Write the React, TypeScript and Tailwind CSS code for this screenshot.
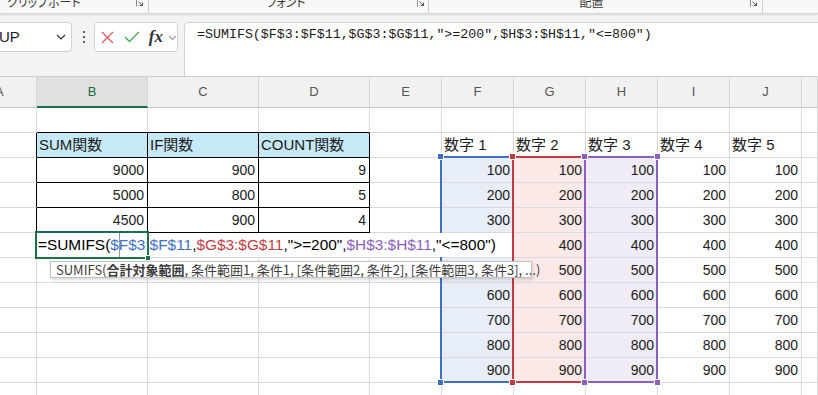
import React from 'react';

const CELL_FONT = "font-['Liberation_Sans','Noto_Sans_CJK_JP',sans-serif]";

const COLS = ['A', 'B', 'C', 'D', 'E', 'F', 'G', 'H', 'I', 'J', ''];
const GRID = 'grid grid-cols-[37px_111px_111px_111px_72px_72px_72px_72px_72px_72px_1fr]';

type CellVal = { t: string; kind: 'head' | 'num' };

function cellValue(r: number, c: number): CellVal | null {
  if (r === 2) {
    if (c === 1) return { t: 'SUM関数', kind: 'head' };
    if (c === 2) return { t: 'IF関数', kind: 'head' };
    if (c === 3) return { t: 'COUNT関数', kind: 'head' };
    if (c >= 5 && c <= 9) return { t: '数字 ' + (c - 4), kind: 'head' };
    return null;
  }
  const table: Record<number, string[]> = {
    3: ['9000', '900', '9'],
    4: ['5000', '800', '5'],
    5: ['4500', '900', '4'],
  };
  if (table[r] && c >= 1 && c <= 3) return { t: table[r][c - 1], kind: 'num' };
  if (r >= 3 && r <= 11 && c >= 5 && c <= 9) return { t: String((r - 2) * 100), kind: 'num' };
  return null;
}

function Cell({ r, c }: { r: number; c: number }) {
  const rightBlack = c <= 3 && r >= 2 && r <= 5;
  const bottomBlack = c >= 1 && c <= 3 && r >= 1 && r <= 5;
  let bg = '';
  if (r === 2 && c >= 1 && c <= 3) bg = 'bg-[#c6e8f7]';
  else if (r >= 3 && r <= 11 && c === 5) bg = 'bg-[#e8eef8]';
  else if (r >= 3 && r <= 11 && c === 6) bg = 'bg-[#fbe9e8]';
  else if (r >= 3 && r <= 11 && c === 7) bg = 'bg-[#efecf7]';
  const v = cellValue(r, c);
  return (
    <div
      className={
        'h-[25px] border-r border-b flex items-center overflow-hidden whitespace-nowrap text-[#1b1b1b] ' +
        (rightBlack ? 'border-r-black ' : 'border-r-[#dadada] ') +
        (bottomBlack ? 'border-b-black ' : 'border-b-[#dadada] ') +
        bg +
        (v && v.kind === 'num' ? ' justify-end pr-[3px] text-[14px]' : ' justify-start pl-[2px] text-[15px]')
      }
    >
      {v ? v.t : null}
    </div>
  );
}

function Launcher() {
  return (
    <svg width="8" height="8" viewBox="0 0 8 8" className="shrink-0 mt-[-1px]">
      <path d="M0.5 7.5 V0.5 H7.5" stroke="#8a8a8a" strokeWidth="1" fill="none" />
      <path d="M2.5 2.5 L6.5 6.5 M6.5 3.5 V6.5 H3.5" stroke="#555" strokeWidth="1" fill="none" />
    </svg>
  );
}

function Handle({ pos, color }: { pos: 'tl' | 'tr' | 'bl' | 'br'; color: string }) {
  const p =
    pos === 'tl'
      ? '-left-[5px] -top-[5px]'
      : pos === 'tr'
      ? '-right-[5px] -top-[5px]'
      : pos === 'bl'
      ? '-left-[5px] -bottom-[5px]'
      : '-right-[5px] -bottom-[5px]';
  return <div className={'absolute w-[7px] h-[7px] border border-white ' + p + ' ' + color} />;
}

export default function App() {
  const rows = Array.from({ length: 12 }, (_, i) => i + 1);
  return (
    <div className={'w-[818px] h-[395px] overflow-hidden bg-white flex flex-col ' + CELL_FONT}>
      {/* ribbon group labels strip */}
      <div className="relative z-10 h-[14px] shrink-0 bg-[#f8f8f8] border-b border-[#d6d6d6] shadow-[0_1px_2px_rgba(0,0,0,0.12)] flex overflow-hidden text-[12px] leading-[12px] text-[#3a3a3a] font-['Noto_Sans_CJK_JP',sans-serif] [font-feature-settings:'palt']">
        <div className="w-[149px] shrink-0 flex items-start border-r border-[#d0d0d0]">
          <span className="flex-1 pl-[7px] mt-[-4px]">クリップボード</span>
          <Launcher />
          <span className="w-[4px]" />
        </div>
        <div className="w-[280px] shrink-0 flex items-start border-r border-[#d0d0d0]">
          <span className="flex-1 text-center mt-[-4px] pl-[6px]">フォント</span>
          <Launcher />
          <span className="w-[3px]" />
        </div>
        <div className="w-[334px] shrink-0 flex items-start border-r border-[#d0d0d0]">
          <span className="flex-1 text-center mt-[-4px] pl-[4px]">配置</span>
          <Launcher />
          <span className="w-[4px]" />
        </div>
        <div className="flex-1" />
      </div>

      {/* formula bar */}
      <div className="h-[62px] shrink-0 bg-[#f3f3f3] flex items-start pt-[8px]">
        <div className="ml-[-10px] w-[82px] h-[30px] bg-white border border-[#d1d1d1] rounded-[4px] flex items-center pl-[9px] pr-[5px]">
          <span className="flex-1 text-[15px] text-[#1b1b1b] font-['Liberation_Sans',sans-serif] ml-[-1px]">UP</span>
          <svg width="10" height="6" viewBox="0 0 10 6">
            <path d="M1 1 L5 5 L9 1" stroke="#333" strokeWidth="1.2" fill="none" />
          </svg>
        </div>
        <div className="w-[22px] h-[30px] flex flex-col items-center justify-center gap-[3px] pl-[1px]">
          <span className="w-[2px] h-[2px] bg-[#333] rounded-full" />
          <span className="w-[2px] h-[2px] bg-[#333] rounded-full" />
          <span className="w-[2px] h-[2px] bg-[#333] rounded-full" />
        </div>
        <div className="w-[84px] h-[30px] bg-white border border-[#d1d1d1] rounded-[4px] flex items-center pl-[5px]">
          <svg width="13" height="13" viewBox="0 0 13 13" className="ml-[1px]">
            <path d="M1 1 L12 12 M12 1 L1 12" stroke="#e05a5f" strokeWidth="1.3" fill="none" />
          </svg>
          <svg width="16" height="12" viewBox="0 0 16 12" className="ml-[10px]">
            <path d="M1 6 L5.5 10.5 L15 1" stroke="#4caa68" strokeWidth="1.4" fill="none" />
          </svg>
          <span className="ml-[9px] text-[17px] leading-[20px] italic font-bold text-[#333] font-['Liberation_Serif',serif]">fx</span>
          <svg width="9" height="6" viewBox="0 0 9 6" className="ml-[5px] mt-[2px]">
            <path d="M1 1 L4.5 4.5 L8 1" stroke="#9a9a9a" strokeWidth="1.1" fill="none" />
          </svg>
        </div>
        <div className="ml-[6px] flex-1 mr-[-6px] h-[54px] bg-white border border-b-0 border-[#d1d1d1] rounded-tl-[5px] pl-[12px] pt-[2px]">
          <div className="text-[13.3px] leading-[20px] text-[#1b1b1b] font-['Liberation_Mono',monospace] whitespace-nowrap">
            {'=SUMIFS($F$3:$F$11,$G$3:$G$11,">=200",$H$3:$H$11,"<=800")'}
          </div>
        </div>
      </div>

      {/* column headers */}
      <div className={GRID + ' h-[32px] shrink-0 bg-[#f1f1f1] border-t border-[#cfcfcf]'}>
        {COLS.map((c, i) => (
          <div
            key={i}
            className={
              'h-[31px] border-r border-[#d6d6d6] flex items-center text-[13px] font-["Liberation_Sans",sans-serif] ' +
              (i === 1
                ? 'bg-[#e0e0e0] border-b-2 border-b-[#1e7145] text-[#1e6b40] justify-center'
                : i === 0
                ? 'border-b border-b-[#c4c4c4] text-[#555] justify-start'
                : 'border-b border-b-[#c4c4c4] text-[#555] justify-center')
            }
          >
            {i === 0 ? <span className="ml-[-5px]">{c}</span> : c}
          </div>
        ))}
      </div>

      {/* sheet body */}
      <div className="relative flex-1 overflow-hidden">
        <div className={GRID}>
          {rows.map((r) => COLS.map((_, c) => <Cell key={r + '-' + c} r={r} c={c} />))}
        </div>

        {/* reference range highlights */}
        <div className="absolute left-[440px] top-[48px] w-[74px] h-[227px] border-2 border-[#3d6fc4]">
          <Handle pos="tl" color="bg-[#3d6fc4]" />
          <Handle pos="bl" color="bg-[#3d6fc4]" />
        </div>
        <div className="absolute left-[512px] top-[48px] w-[74px] h-[227px] border-2 border-[#c43a42]">
          <Handle pos="tl" color="bg-[#c43a42]" />
          <Handle pos="bl" color="bg-[#c43a42]" />
        </div>
        <div className="absolute left-[584px] top-[48px] w-[74px] h-[227px] border-2 border-[#8b5fc0]">
          <Handle pos="tl" color="bg-[#8b5fc0]" />
          <Handle pos="tr" color="bg-[#8b5fc0]" />
          <Handle pos="bl" color="bg-[#8b5fc0]" />
          <Handle pos="br" color="bg-[#8b5fc0]" />
        </div>

        {/* in-cell editor */}
        <div className="absolute left-[37px] top-[125px] w-[475px] h-[24px] bg-white">
          <div className="absolute -left-[2px] -top-[2px] w-[114px] h-[28px] border-2 border-[#1e7145]" />
          <div className="absolute left-[108px] top-[22px] w-[6px] h-[6px] bg-[#1e7145] border border-white" />
          <div className="relative pl-[1px] text-[15.4px] leading-[24px] text-black whitespace-nowrap">
            <span>=SUMIFS(</span>
            <span className="text-[#3d6fc4]">$</span>
            <span className="inline-block w-px h-[24px] bg-[#9a9a9a] align-top -mr-px" />
            <span className="text-[#3d6fc4]">F$3:$F$11</span>
            <span>,</span>
            <span className="text-[#c43a42]">$G$3:$G$11</span>
            <span>{',">=200",'}</span>
            <span className="text-[#8b5fc0]">$H$3:$H$11</span>
            <span>{',"<=800")'}</span>
          </div>
        </div>

        {/* function tooltip */}
        <div className="absolute left-[50px] top-[153px] w-[482px] h-[17px] bg-white border border-[#c2c2c2] shadow-[1px_2px_3px_rgba(0,0,0,0.15)] pl-[5px] text-[13px] leading-[15px] text-[#3c3c3c] whitespace-nowrap font-['Noto_Sans_CJK_JP',sans-serif]">
          SUMIFS(<span className="font-bold">合計対象範囲</span>, 条件範囲1, 条件1, [条件範囲2, 条件2], [条件範囲3, 条件3], ...)
        </div>
      </div>
    </div>
  );
}
